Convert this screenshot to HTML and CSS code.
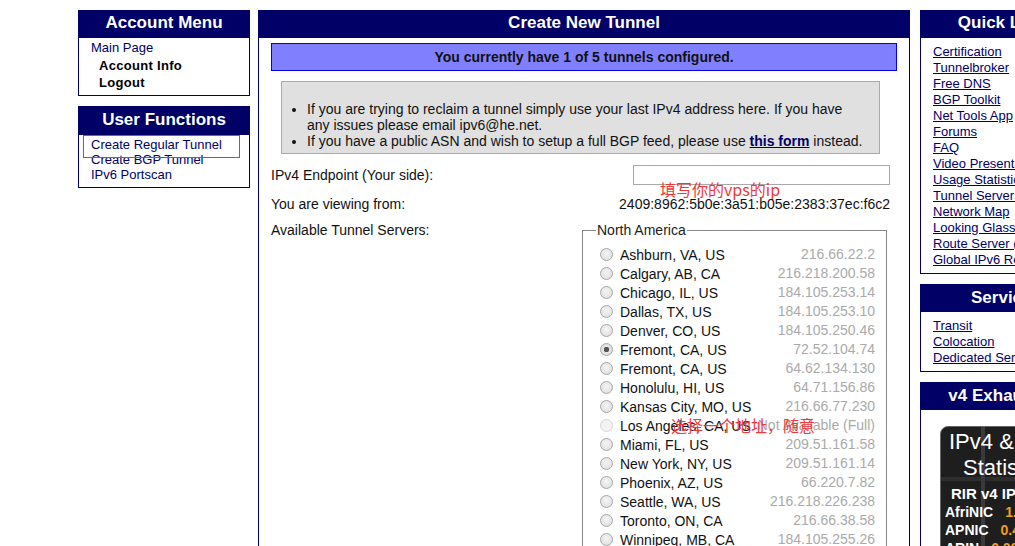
FILE: index.html
```html
<!DOCTYPE html>
<html>
<head>
<meta charset="utf-8">
<link rel="stylesheet" href="styles.css">
</head>
<body>
<div class="page">
  <div class="col-left">
    <div class="box">
      <div class="box-head">Account Menu</div>
      <div class="menu">
        <a class="menu-link" href="#">Main Page</a>
        <a class="menu-sub" href="#">Account Info</a>
        <a class="menu-sub" href="#">Logout</a>
      </div>
    </div>
    <div class="box box-uf">
      <div class="box-head">User Functions</div>
      <div class="menu menu-uf">
        <a class="menu-link" href="#">Create Regular Tunnel</a>
        <a class="menu-link" href="#">Create BGP Tunnel</a>
        <a class="menu-link" href="#">IPv6 Portscan</a>
        <span class="mark-box"></span>
      </div>
    </div>
  </div>

  <div class="col-main">
    <div class="box-head main-head">Create New Tunnel</div>
    <div class="main-body">
      <div class="notice">You currently have 1 of 5 tunnels configured.</div>
      <div class="info">
        <ul>
          <li>If you are trying to reclaim a tunnel simply use your last IPv4 address here. If you have any issues please email ipv6@he.net.</li>
          <li>If you have a public ASN and wish to setup a full BGP feed, please use <a href="#">this form</a> instead.</li>
        </ul>
      </div>
      <div class="form">
        <div class="lbl">IPv4 Endpoint (Your side):</div>
        <div class="val"><input class="ipin" type="text"><span class="note note-ip">填写你的vps的ip</span></div>
        <div class="lbl">You are viewing from:</div>
        <div class="val">2409:8962:5b0e:3a51:b05e:2383:37ec:f6c2</div>
        <div class="lbl lbl-srv">Available Tunnel Servers:</div>
        <div class="val">
          <fieldset class="servers">
            <legend>North America</legend>
            <label class="srv"><input type="radio" name="s"><span class="city">Ashburn, VA, US</span><span class="ip">216.66.22.2</span></label>
            <label class="srv"><input type="radio" name="s"><span class="city">Calgary, AB, CA</span><span class="ip">216.218.200.58</span></label>
            <label class="srv"><input type="radio" name="s"><span class="city">Chicago, IL, US</span><span class="ip">184.105.253.14</span></label>
            <label class="srv"><input type="radio" name="s"><span class="city">Dallas, TX, US</span><span class="ip">184.105.253.10</span></label>
            <label class="srv"><input type="radio" name="s"><span class="city">Denver, CO, US</span><span class="ip">184.105.250.46</span></label>
            <label class="srv"><input type="radio" name="s" checked><span class="city">Fremont, CA, US</span><span class="ip">72.52.104.74</span></label>
            <label class="srv"><input type="radio" name="s"><span class="city">Fremont, CA, US</span><span class="ip">64.62.134.130</span></label>
            <label class="srv"><input type="radio" name="s"><span class="city">Honolulu, HI, US</span><span class="ip">64.71.156.86</span></label>
            <label class="srv"><input type="radio" name="s"><span class="city">Kansas City, MO, US</span><span class="ip">216.66.77.230</span></label>
            <label class="srv"><input type="radio" name="s" disabled><span class="city">Los Angeles, CA, US</span><span class="ip">Not Available (Full)</span><span class="note note-pick">选择一个地址，随意</span></label>
            <label class="srv"><input type="radio" name="s"><span class="city">Miami, FL, US</span><span class="ip">209.51.161.58</span></label>
            <label class="srv"><input type="radio" name="s"><span class="city">New York, NY, US</span><span class="ip">209.51.161.14</span></label>
            <label class="srv"><input type="radio" name="s"><span class="city">Phoenix, AZ, US</span><span class="ip">66.220.7.82</span></label>
            <label class="srv"><input type="radio" name="s"><span class="city">Seattle, WA, US</span><span class="ip">216.218.226.238</span></label>
            <label class="srv"><input type="radio" name="s"><span class="city">Toronto, ON, CA</span><span class="ip">216.66.38.58</span></label>
            <label class="srv"><input type="radio" name="s"><span class="city">Winnipeg, MB, CA</span><span class="ip">184.105.255.26</span></label>
          </fieldset>
        </div>
      </div>
    </div>
  </div>

  <div class="col-right">
    <div class="box">
      <div class="box-head">Quick Links</div>
      <div class="links">
        <a href="#">Certification</a>
        <a href="#">Tunnelbroker</a>
        <a href="#">Free DNS</a>
        <a href="#">BGP Toolkit</a>
        <a href="#">Net Tools App</a>
        <a href="#">Forums</a>
        <a href="#">FAQ</a>
        <a href="#">Video Presentations</a>
        <a href="#">Usage Statistics</a>
        <a href="#">Tunnel Server Status</a>
        <a href="#">Network Map</a>
        <a href="#">Looking Glass</a>
        <a href="#">Route Server (telnet)</a>
        <a href="#">Global IPv6 Report</a>
      </div>
    </div>
    <div class="box box-gap">
      <div class="box-head">Services</div>
      <div class="links">
        <a href="#">Transit</a>
        <a href="#">Colocation</a>
        <a href="#">Dedicated Servers</a>
      </div>
    </div>
    <div class="box box-gap">
      <div class="box-head">v4 Exhaustion</div>
      <div class="stats-wrap">
        <div class="stats">
          <div class="st-title">IPv4 &amp;</div>
          <div class="st-title st-sub">Statistics</div>
          <div class="st-rir">RIR v4 IPs</div>
          <div class="st-row">AfriNIC <span class="st-num">1.23</span></div>
          <div class="st-row">APNIC <span class="st-num">0.45</span></div>
          <div class="st-row">ARIN <span class="st-num">0.00</span></div>
        </div>
      </div>
    </div>
  </div>
</div>
</body>
</html>
```

FILE: styles.css
```css
html, body {
  margin: 0;
  padding: 0;
  background: #fff;
  overflow: hidden;
}
body {
  font-family: "Liberation Sans", Arial, sans-serif;
  font-size: 13px;
  color: #000;
  width: 1015px;
  height: 546px;
}
.page {
  display: flex;
  align-items: flex-start;
  padding: 10px 0 0 78px;
  width: 1200px;
}
.col-left {
  width: 172px;
  flex: none;
}
.box {
  border: 1px solid #000066;
  background: #fff;
}
.box-head {
  background: #000066;
  color: #fff;
  font-weight: bold;
  font-size: 17px;
  text-align: center;
  height: 27px;
  line-height: 24px;
}
.menu {
  display: flex;
  flex-direction: column;
  padding: 1px 0 3px 12px;
  line-height: 17.5px;
}
.menu a {
  text-decoration: none;
}
.menu-link {
  color: #000066;
}
.menu-sub {
  color: #000;
  font-weight: bold;
  padding-left: 8px;
  letter-spacing: 0.3px;
}
.box-uf {
  margin-top: 10px;
}
.box-uf .box-head {
  height: 28px;
  line-height: 26px;
}
.menu-uf {
  position: relative;
  line-height: 15px;
  padding: 2px 0 5px 12px;
}
.mark-box {
  position: absolute;
  left: 4px;
  top: 0;
  width: 155px;
  height: 21px;
  border: 1px solid #e0383a;
}

.col-main {
  width: 650px;
  flex: none;
  margin-left: 8px;
  border-left: 1px solid #000066;
  border-right: 1px solid #000066;
  min-height: 560px;
}
.main-head {
  height: 28px;
  line-height: 25px;
}
.main-body {
  padding: 5px 12px 0 12px;
  font-size: 14px;
}
.notice {
  background: #8080ff;
  border: 1px solid #0000ee;
  text-align: center;
  font-weight: bold;
  font-size: 14px;
  height: 26px;
  line-height: 26px;
  color: #111;
}
.info {
  margin: 10px 17px 0 10px;
  background: #e0e0e0;
  border: 1px solid #aaa;
  padding: 19px 6px 4px 0;
  color: #111;
}
.info ul {
  margin: 0;
  padding: 0 8px 0 25px;
  line-height: 16px;
}
.info a {
  color: #000066;
  font-weight: bold;
}
.form {
  display: grid;
  grid-template-columns: 1fr auto;
  padding-right: 7px;
  margin-top: 11px;
  color: #111;
}
.lbl {
  line-height: 20px;
}
.val {
  text-align: right;
  line-height: 20px;
  position: relative;
}
.ipin {
  width: 257px;
  height: 20px;
  box-sizing: border-box;
  border: 1px solid #a9a9a9;
  margin: 0;
  padding: 0;
  vertical-align: top;
}
.form .lbl:nth-of-type(3), .form .val:nth-of-type(4) {
  margin-top: 9px;
}
.lbl-srv {
  margin-top: 6px;
}
.note {
  position: absolute;
  color: #f0383a;
  font-size: 16px;
  line-height: 18px;
  white-space: nowrap;
  font-family: "Noto Sans CJK SC", "Liberation Sans", sans-serif;
}
.note-ip {
  left: 78px;
  top: 15px;
}
.servers {
  margin: 8px 3px 0 0;
  padding: 7px 11px 0 16px;
  border: 1px solid #888;
  border-bottom: none;
  width: 305px;
  box-sizing: border-box;
  text-align: left;
}
.servers legend {
  padding: 0 1px;
  margin-left: -3px;
  line-height: 16px;
  color: #222;
}
.srv {
  display: flex;
  align-items: center;
  height: 19px;
  position: relative;
}
.srv input {
  appearance: none;
  -webkit-appearance: none;
  width: 13px;
  height: 13px;
  margin: 0 7px 0 1px;
  border: 1px solid #a6a6a6;
  border-radius: 50%;
  background: radial-gradient(circle at 50% 40%, #f4f4f4 0%, #dcdcdc 100%);
  box-sizing: border-box;
  flex: none;
}
.srv input:checked {
  background: radial-gradient(circle, #555 0, #555 2.5px, #e6e6e6 3px, #d8d8d8 100%);
}
.srv input:disabled {
  border-color: #d6d6d6;
  background: #f2f2f2;
}
.city {
  color: #111;
  line-height: 19px;
  padding-top: 2px;
}
.ip {
  margin-left: auto;
  color: #aaa;
  line-height: 19px;
}
.note-pick {
  left: 72px;
  top: 0;
}

.col-right {
  width: 172px;
  flex: none;
  margin-left: 10px;
}
.links {
  display: flex;
  flex-direction: column;
  align-items: flex-start;
  padding: 6px 0 5px 12px;
  line-height: 16px;
  white-space: nowrap;
}
.links a {
  color: #000066;
  text-decoration: underline;
}
.box-gap {
  margin-top: 10px;
}
.box-gap .box-head {
  line-height: 26px;
}
.stats-wrap {
  padding: 16px 0 0 19px;
  height: 140px;
}
.stats {
  background: #1e1e1e;
  border: 1px solid #666;
  border-radius: 8px;
  width: 150px;
  height: 160px;
  color: #fff;
  padding: 3px 0 0 8px;
  box-sizing: border-box;
  background-image: linear-gradient(90deg, transparent 40px, #3a3a3a 40px, #3a3a3a 44px, transparent 44px),
                    linear-gradient(180deg, transparent 50px, #2e2e2e 50px, #2e2e2e 54px, transparent 54px);
}
.st-title {
  font-size: 22px;
  line-height: 24px;
}
.st-sub {
  padding-left: 14px;
  margin-top: 2px;
}
.st-rir {
  font-weight: bold;
  font-size: 15px;
  margin-top: 5px;
  padding-left: 2px;
  line-height: 18px;
}
.st-row {
  font-weight: bold;
  font-size: 14px;
  line-height: 18px;
  margin-left: -4px;
}
.st-num {
  color: #f0a020;
  margin-left: 8px;
}
```
